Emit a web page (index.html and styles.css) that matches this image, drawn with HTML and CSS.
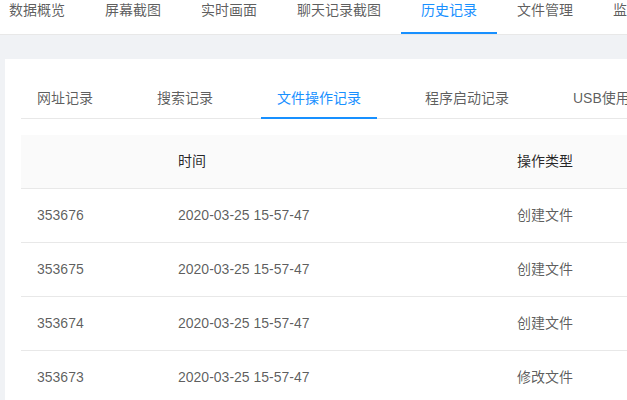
FILE: index.html
```html
<!DOCTYPE html>
<html lang="zh-CN">
<head>
    <meta charset="UTF-8">
    <title>历史记录</title>
    <link rel="stylesheet" href="styles.css">
</head>
<body>

    <!-- Top menu -->
    <div class="top-menu">
        <ul class="menu-list">
            <li class="menu-item">数据概览</li>
            <li class="menu-item">屏幕截图</li>
            <li class="menu-item">实时画面</li>
            <li class="menu-item">聊天记录截图</li>
            <li class="menu-item active">历史记录</li>
            <li class="menu-item">文件管理</li>
            <li class="menu-item">监控设置</li>
        </ul>
    </div>

    <div class="content">
        <div class="card">
            <div class="tabs">
                <div class="tab">网址记录</div>
                <div class="tab">搜索记录</div>
                <div class="tab active">文件操作记录</div>
                <div class="tab">程序启动记录</div>
                <div class="tab">USB使用记录</div>
            </div>

            <table class="record-table">
                <colgroup>
                    <col class="col-id">
                    <col class="col-time">
                    <col class="col-type">
                </colgroup>
                <thead>
                    <tr>
                        <th></th>
                        <th>时间</th>
                        <th>操作类型</th>
                    </tr>
                </thead>
                <tbody>
                    <tr>
                        <td>353676</td>
                        <td>2020-03-25 15-57-47</td>
                        <td>创建文件</td>
                    </tr>
                    <tr>
                        <td>353675</td>
                        <td>2020-03-25 15-57-47</td>
                        <td>创建文件</td>
                    </tr>
                    <tr>
                        <td>353674</td>
                        <td>2020-03-25 15-57-47</td>
                        <td>创建文件</td>
                    </tr>
                    <tr>
                        <td>353673</td>
                        <td>2020-03-25 15-57-47</td>
                        <td>修改文件</td>
                    </tr>
                </tbody>
            </table>
        </div>
    </div>

</body>
</html>
```

FILE: styles.css
```css
body {
    margin: 0;
    font-family: "Liberation Sans", "Noto Sans CJK SC", sans-serif;
    font-size: 14px;
    color: rgba(0, 0, 0, 0.65);
    background-color: #f0f2f5;
    overflow: hidden;
    width: 627px;
    height: 400px;
}

.top-menu {
    background-color: #fff;
    border-bottom: 1px solid #e8e8e8;
    height: 34px;
    overflow: hidden;
}

.menu-list {
    display: flex;
    margin: 0 0 0 -11px;
    padding: 0;
    list-style: none;
    white-space: nowrap;
}

    .menu-list .menu-item {
        padding: 0 20px 11px;
        line-height: 21px;
        border-bottom: 2px solid transparent;
    }

    .menu-list .menu-item.active {
        color: #1890ff;
        border-bottom-color: #1890ff;
    }

.content {
    padding: 24px 0 0 5px;
}

.card {
    width: 900px;
    background-color: #fff;
    padding: 16px;
    height: 400px;
}

.tabs {
    display: flex;
    gap: 32px;
    border-bottom: 1px solid #e8e8e8;
    white-space: nowrap;
    margin-bottom: 16px;
}

    .tabs .tab {
        padding: 13px 16px 8px;
        line-height: 21px;
        border-bottom: 2px solid transparent;
        margin-bottom: -1px;
    }

    .tabs .tab.active {
        color: #1890ff;
        border-bottom-color: #1890ff;
    }

.record-table {
    border-collapse: collapse;
    table-layout: fixed;
    width: 900px;
}

    .record-table .col-id {
        width: 141px;
    }

    .record-table .col-time {
        width: 339px;
    }

    .record-table th, .record-table td {
        padding: 16px;
        line-height: 21px;
        text-align: left;
        border-bottom: 1px solid #e8e8e8;
        white-space: nowrap;
    }

    .record-table th {
        background-color: #fafafa;
        color: rgba(0, 0, 0, 0.85);
        font-weight: normal;
    }
```
